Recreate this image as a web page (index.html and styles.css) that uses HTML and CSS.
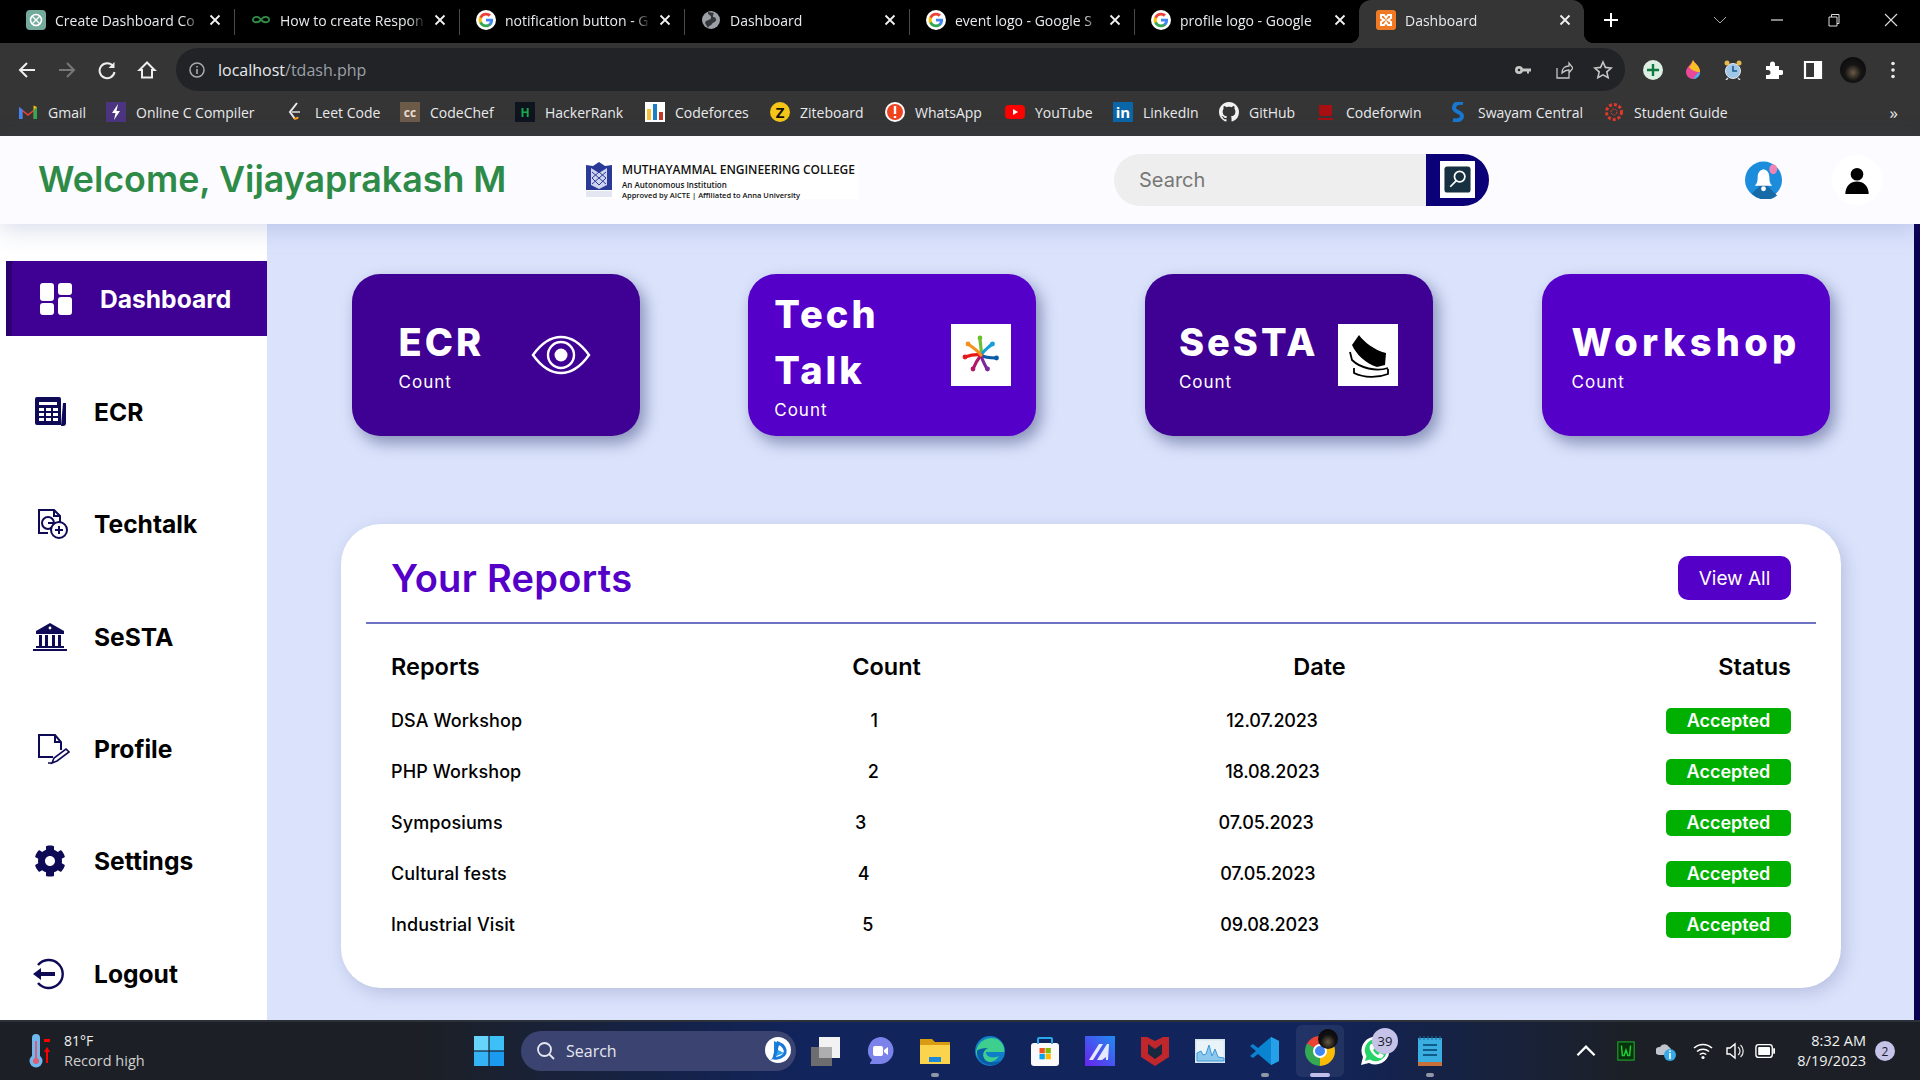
FILE: index.html
```html
<!DOCTYPE html>
<html>
<head>
  <title>Dashboard</title>
  <link rel="stylesheet" href="styles.css">
</head>
<body>

<svg class="defs">
  <symbol id="g-logo" viewBox="-3 -3 30 30">
    <circle cx="12" cy="12" r="15" fill="#fff"/>
    <path fill="#4285F4" d="M22.56 12.25c0-.78-.07-1.53-.2-2.25H12v4.26h5.92c-.26 1.37-1.04 2.53-2.21 3.31v2.77h3.57c2.08-1.92 3.28-4.74 3.28-8.09z"/>
    <path fill="#34A853" d="M12 23c2.97 0 5.46-.98 7.28-2.66l-3.57-2.77c-.98.66-2.23 1.06-3.71 1.06-2.86 0-5.29-1.93-6.16-4.53H2.18v2.84C3.99 20.53 7.7 23 12 23z"/>
    <path fill="#FBBC05" d="M5.84 14.09c-.22-.66-.35-1.36-.35-2.09s.13-1.43.35-2.09V7.07H2.18C1.43 8.55 1 10.22 1 12s.43 3.45 1.18 4.93l2.85-2.22.81-.62z"/>
    <path fill="#EA4335" d="M12 5.38c1.62 0 3.06.56 4.21 1.64l3.15-3.15C17.45 2.09 14.97 1 12 1 7.7 1 3.99 3.47 2.18 7.07l3.66 2.84c.87-2.6 3.3-4.53 6.16-4.53z"/>
  </symbol>
  <symbol id="close-x" viewBox="0 0 12 12">
    <path d="M1.5 1.5l9 9M10.5 1.5l-9 9" stroke="#f2f2f2" stroke-width="1.8" fill="none"/>
  </symbol>
</svg>

<div class="tabstrip">
  <div class="tab">
    <svg class="fav" viewBox="0 0 20 20"><rect width="20" height="20" rx="4" fill="#74aa9c"/><circle cx="10" cy="10" r="5.5" fill="none" stroke="#fff" stroke-width="1.6"/><path d="M6 6l8 8M14 6l-8 8" stroke="#fff" stroke-width="1.2"/></svg>
    <span class="tab-title">Create Dashboard Co</span>
    <svg class="tab-close"><use href="#close-x"/></svg>
  </div>
  <div class="tab">
    <svg class="fav" viewBox="0 0 20 20"><path d="M10 10C8 6 3 6 2 9c-1 3 4 5 8 1zM10 10c2-4 7-4 8-1 1 3-4 5-8 1z" fill="none" stroke="#2f8d46" stroke-width="1.8"/></svg>
    <span class="tab-title">How to create Respon</span>
    <svg class="tab-close"><use href="#close-x"/></svg>
  </div>
  <div class="tab">
    <svg class="fav"><use href="#g-logo"/></svg>
    <span class="tab-title">notification button - G</span>
    <svg class="tab-close"><use href="#close-x"/></svg>
  </div>
  <div class="tab">
    <svg class="fav" viewBox="0 0 20 20"><circle cx="10" cy="10" r="9" fill="#9aa0a6"/><path d="M7 2c-1 3 4 3 3 6S5 9 4 13l3 5c1-3 3-2 4-4s5-2 4-5-3-1-3-3 1-3 1-3z" fill="#35363a"/></svg>
    <span class="tab-title">Dashboard</span>
    <svg class="tab-close"><use href="#close-x"/></svg>
  </div>
  <div class="tab">
    <svg class="fav"><use href="#g-logo"/></svg>
    <span class="tab-title">event logo - Google S</span>
    <svg class="tab-close"><use href="#close-x"/></svg>
  </div>
  <div class="tab">
    <svg class="fav"><use href="#g-logo"/></svg>
    <span class="tab-title">profile logo - Google</span>
    <svg class="tab-close"><use href="#close-x"/></svg>
  </div>
  <div class="tab tab-active">
    <svg class="fav" viewBox="0 0 20 20"><rect width="20" height="20" rx="3" fill="#ef7a23"/><path d="M5 5h3l2 3 2-3h3v3l-3 2 3 2v3h-3l-2-3-2 3H5v-3l3-2-3-2z" fill="none" stroke="#fff" stroke-width="2"/></svg>
    <span class="tab-title">Dashboard</span>
    <svg class="tab-close"><use href="#close-x"/></svg>
  </div>
  <svg class="new-tab" viewBox="0 0 16 16"><path d="M8 1v14M1 8h14" stroke="#fff" stroke-width="2"/></svg>
  <div class="win-controls">
    <svg viewBox="0 0 14 14"><path d="M1 4l6 6 6-6" stroke="#aaa" fill="none"/></svg>
    <svg viewBox="0 0 14 14"><path d="M1 7h12" stroke="#ddd" stroke-width="1.2"/></svg>
    <svg viewBox="0 0 14 14"><path d="M2 4h8v9H2zM4.5 4V1.5h7.5v9H10" stroke="#ddd" fill="none"/></svg>
    <svg viewBox="0 0 14 14"><path d="M1 1l12 12M13 1L1 13" stroke="#ddd" stroke-width="1.1"/></svg>
  </div>
</div>

<div class="toolbar">
  <div class="nav-btns">
    <svg viewBox="0 0 20 20"><path d="M18 10H3M10 3l-7 7 7 7" fill="none" stroke="#eee" stroke-width="2"/></svg>
    <svg viewBox="0 0 20 20"><path d="M2 10h15M10 3l7 7-7 7" fill="none" stroke="#777" stroke-width="2"/></svg>
    <svg viewBox="0 0 20 20"><path d="M16 6a7.5 7.5 0 1 0 1.5 6" fill="none" stroke="#eee" stroke-width="2"/><path d="M17.5 2v6h-6z" fill="#eee"/></svg>
    <svg viewBox="0 0 20 20"><path d="M10 2.5L2.5 10H5v7.5h10V10h2.5z" fill="none" stroke="#eee" stroke-width="2"/></svg>
  </div>
  <div class="omnibox">
    <svg class="omni-info" viewBox="0 0 16 16"><circle cx="8" cy="8" r="7" fill="none" stroke="#aaa" stroke-width="1.5"/><path d="M8 7v5M8 4v1.6" stroke="#aaa" stroke-width="1.6"/></svg>
    <span class="url"><span class="url-host">localhost</span>/tdash.php</span>
    <div class="omni-icons">
      <svg viewBox="0 0 20 20"><circle cx="6" cy="10" r="4" fill="#c4c7c5"/><path d="M9 8.500h9v3h-2v2h-2v-2H9z" fill="#c4c7c5"/><circle cx="6" cy="10" r="1.300" fill="#222326"/></svg>
      <svg viewBox="0 0 20 20"><path d="M4 8v10h12v-5M9 13c0-5 3-7 7-7V3l4 5-4 5v-3c-3 0-5 1-7 3z" fill="none" stroke="#c4c7c5" stroke-width="1.3"/></svg>
      <svg viewBox="0 0 20 20"><path d="M10 2l2.400 5.400 5.800.6-4.400 3.900 1.300 5.800L10 14.800l-5.100 2.900 1.300-5.800L1.800 8l5.800-.6z" fill="none" stroke="#c4c7c5" stroke-width="1.6"/></svg>
    </div>
  </div>
  <div class="ext-icons">
    <svg viewBox="0 0 20 20"><circle cx="10" cy="10" r="10" fill="#dcefe2"/><path d="M10 4v12M4 10h12" stroke="#0c7a3e" stroke-width="2.4"/></svg>
    <svg viewBox="0 0 20 20"><path d="M10 0c2 4 7 6 7 12a7 7 0 0 1-14 0c0-5 5-7 7-12z" fill="#ec4899"/><path d="M10 0c2 4 7 6 7 12-4 0-9-2-11-5 2-2 3-4 4-7z" fill="#fbbf24"/><path d="M17 12a7 7 0 0 1-7 7c2-2 4-6 7-7z" fill="#38bdf8"/></svg>
    <svg viewBox="0 0 20 20"><circle cx="10" cy="11" r="7.5" fill="#9fc7e8" stroke="#e5e7eb"/><path d="M10 6v5h4" stroke="#1e5a8a" stroke-width="1.6" fill="none"/><circle cx="4" cy="3" r="2.5" fill="#e5b94f"/><circle cx="16" cy="3" r="2.5" fill="#e5b94f"/><path d="M5 18l-2 2M15 18l2 2" stroke="#ddd" stroke-width="1.5"/></svg>
    <svg viewBox="0 0 20 20"><path d="M3 6h4V4a2.500 2.500 0 0 1 5 0v2h4v4h2a2.500 2.500 0 0 1 0 5h-2v4H3v-4h2a2.500 2.500 0 0 0 0-5H3z" fill="#fff"/></svg>
    <svg viewBox="0 0 20 20"><path d="M2 2h16v16H2z" fill="none" stroke="#fff" stroke-width="2.2"/><rect x="11" y="2" width="7" height="16" fill="#fff"/></svg>
    <span class="ext-avatar"></span>
    <svg viewBox="0 0 20 20"><circle cx="10" cy="3.500" r="1.800" fill="#e8eaed"/><circle cx="10" cy="10" r="1.800" fill="#e8eaed"/><circle cx="10" cy="16.500" r="1.800" fill="#e8eaed"/></svg>
  </div>
</div>

<div class="bookmarks">
  <div class="bm"><svg class="bm-icon" viewBox="0 0 20 20"><path d="M1 5l9 7 9-7v12h-3.500V9.500L10 14 4.500 9.500V17H1z" fill="#ea4335"/><path d="M1 17V5l3.500 2.600V17z" fill="#4285f4"/><path d="M19 17V5l-3.500 2.600V17z" fill="#34a853"/><path d="M15.500 3.500L19 5l-3.500 3z" fill="#fbbc05"/></svg>Gmail</div>
  <div class="bm"><svg class="bm-icon" viewBox="0 0 20 20"><rect width="20" height="20" fill="#4b3480"/><path d="M12 2L6 11h3.500L8 18l6-9h-3.500z" fill="#fff"/></svg>Online C Compiler</div>
  <div class="bm"><svg class="bm-icon" viewBox="0 0 20 20"><path d="M12 1L5 10l5 7" fill="none" stroke="#e8eaed" stroke-width="2"/><path d="M7 10h8" stroke="#b3b3b3" stroke-width="2"/><path d="M13 15c-1 2-3 2-4 1" stroke="#ffa116" fill="none" stroke-width="2"/></svg>Leet Code</div>
  <div class="bm"><span class="bm-icon bm-cc">cc</span>CodeChef</div>
  <div class="bm"><span class="bm-icon bm-hr">H</span>HackerRank</div>
  <div class="bm"><svg class="bm-icon" viewBox="0 0 20 20"><rect width="20" height="20" fill="#fff"/><rect x="2" y="7" width="4" height="11" fill="#f5c33b"/><rect x="8" y="2" width="4" height="16" fill="#1b81c4"/><rect x="14" y="10" width="4" height="8" fill="#c0392b"/></svg>Codeforces</div>
  <div class="bm"><span class="bm-icon bm-zite">Z</span>Ziteboard</div>
  <div class="bm"><svg class="bm-icon" viewBox="0 0 20 20"><circle cx="10" cy="10" r="10" fill="#fff"/><circle cx="10" cy="10" r="8" fill="#f0441f"/><path d="M10 4v8M10 14v2" stroke="#fff" stroke-width="2.4"/></svg>WhatsApp</div>
  <div class="bm"><svg class="bm-icon" viewBox="0 0 20 20"><rect y="3" width="20" height="14" rx="4" fill="#f00"/><path d="M8 7l5 3-5 3z" fill="#fff"/></svg>YouTube</div>
  <div class="bm"><span class="bm-icon bm-in">in</span>LinkedIn</div>
  <div class="bm"><svg class="bm-icon" viewBox="0 0 16 16"><path fill="#f2f2f2" d="M8 0C3.58 0 0 3.58 0 8c0 3.54 2.29 6.53 5.47 7.59.4.07.55-.17.55-.38 0-.19-.01-.82-.01-1.49-2.01.37-2.53-.49-2.69-.94-.09-.23-.48-.94-.82-1.13-.28-.15-.68-.52-.01-.53.63-.01 1.08.58 1.23.82.72 1.21 1.87.87 2.33.66.07-.52.28-.87.51-1.07-1.78-.2-3.64-.89-3.64-3.95 0-.87.31-1.59.82-2.15-.08-.2-.36-1.02.08-2.12 0 0 .67-.21 2.2.82.64-.18 1.32-.27 2-.27s1.36.09 2 .27c1.53-1.04 2.2-.82 2.2-.82.44 1.1.16 1.92.08 2.12.51.56.82 1.27.82 2.15 0 3.07-1.87 3.75-3.65 3.95.29.25.54.73.54 1.48 0 1.07-.01 1.93-.01 2.2 0 .21.15.46.55.38A8.01 8.01 0 0016 8c0-4.42-3.58-8-8-8z"/></svg>GitHub</div>
  <div class="bm"><svg class="bm-icon" viewBox="0 0 20 20"><path d="M3 3h13v9a2 2 0 0 1-2 2H5a2 2 0 0 1-2-2zM2 16h15v2H2z" fill="#a80f12"/></svg>Codeforwin</div>
  <div class="bm"><svg class="bm-icon" viewBox="0 0 20 20"><path d="M15 1c-5-1-9 1-9 5s8 4 8 8-5 5-9 4" fill="none" stroke="#1877cf" stroke-width="4"/></svg>Swayam Central</div>
  <div class="bm"><svg class="bm-icon" viewBox="0 0 20 20"><circle cx="10" cy="10" r="7.500" fill="none" stroke="#e0392b" stroke-width="3" stroke-dasharray="3 2"/><circle cx="10" cy="10" r="3" fill="none" stroke="#e0392b" stroke-dasharray="2 1"/></svg>Student Guide</div>
  <div class="bm-more">&raquo;</div>
</div>

<header class="app-header">
  <h1 class="welcome">Welcome, Vijayaprakash M</h1>
  <div class="college">
    <svg class="crest" viewBox="0 0 28 36"><path d="M1 3l7 1 6-4 6 4 7-1v25H1z" fill="#2a3a96"/><path d="M6 6l8 5 8-5v17l-8 4-8-4z" fill="#cfd4ee"/><path d="M7 10l14 12M21 10L7 22M7 16l7 7 7-7M7 16l7-6 7 6" stroke="#2a3a96" fill="none"/><rect x="1" y="29" width="26" height="6" fill="#e4e6f2"/></svg>
    <div class="college-text">
      <div class="college-name">MUTHAYAMMAL ENGINEERING COLLEGE</div>
      <div class="college-sub">An Autonomous Institution</div>
      <div class="college-sub college-sub-small">Approved by AICTE | Affiliated to Anna University</div>
    </div>
  </div>
  <div class="search">
    <span class="search-text">Search</span>
    <div class="search-btn">
      <span class="search-tile">
        <svg viewBox="0 0 20 20"><rect x="1" y="1" width="18" height="18" rx="2" fill="#173140"/><circle cx="11.500" cy="8" r="3.600" fill="none" stroke="#fff" stroke-width="1.2"/><path d="M9 11l-4 4" stroke="#fff" stroke-width="1.2"/></svg>
      </span>
    </div>
  </div>
  <svg class="bell" viewBox="0 0 38 38">
    <circle cx="19" cy="19" r="19" fill="#1c8cdc"/>
    <path d="M19 21l14 14a19 19 0 0 1-26-2z" fill="#166aa8"/>
    <path d="M19 8c-4 1-6 4-6 8 0 5-1 7-3 9h18c-2-2-3-4-3-9 0-4-2-7-6-8z" fill="#fff"/>
    <circle cx="19" cy="28" r="2.500" fill="#fff"/>
    <ellipse cx="29" cy="8" rx="4" ry="5" fill="#f083b4"/>
  </svg>
  <div class="user-btn">
    <svg viewBox="0 0 26 30"><circle cx="13" cy="8" r="7" fill="#000"/><path d="M0 30c0-9 6-14 13-14s13 5 13 14z" fill="#000"/></svg>
  </div>
</header>

<div class="app-body">
  <nav class="sidebar">
    <a class="nav-item nav-active">
      <svg class="nav-icon" viewBox="0 0 40 32"><rect x="6" width="14" height="18" rx="3" fill="#fff"/><rect x="6" y="20" width="14" height="12" rx="3" fill="#fff"/><rect x="24" width="14" height="12" rx="3" fill="#fff"/><rect x="24" y="14" width="14" height="18" rx="3" fill="#fff"/></svg>
      <span>Dashboard</span>
    </a>
    <a class="nav-item">
      <svg class="nav-icon" viewBox="0 0 40 32"><path d="M5 3a2 2 0 0 1 2-2h22a2 2 0 0 1 2 2v26H7a2 2 0 0 1-2-2z" fill="#0e0a56"/><path d="M33 7h3v20a3 3 0 0 1-3 3h-2z" fill="#0e0a56"/><g fill="#fff"><rect x="9" y="6" width="18" height="3"/><rect x="9" y="12" width="5" height="3"/><rect x="16" y="12" width="5" height="3"/><rect x="23" y="12" width="5" height="3"/><rect x="9" y="17" width="5" height="3"/><rect x="16" y="17" width="5" height="3"/><rect x="23" y="17" width="5" height="3"/><rect x="9" y="22" width="5" height="3"/><rect x="16" y="22" width="5" height="3"/><rect x="23" y="22" width="5" height="3"/></g></svg>
      <span>ECR</span>
    </a>
    <a class="nav-item">
      <svg class="nav-icon" viewBox="0 0 40 32"><g fill="none" stroke="#0e0a56" stroke-width="2"><path d="M18 25H9V2h15l6 6v7"/><path d="M24 2v6h6"/><circle cx="18" cy="15" r="6"/><path d="M18 15h6"/><circle cx="29" cy="22" r="8" fill="#fff"/><path d="M29 18v8M25 22h8"/></g></svg>
      <span>Techtalk</span>
    </a>
    <a class="nav-item">
      <svg class="nav-icon" viewBox="0 0 40 32"><path d="M20 2L6 10v3h28v-3z" fill="#0e0a56"/><g fill="#0e0a56"><rect x="9" y="14" width="3" height="11"/><rect x="15" y="14" width="3" height="11"/><rect x="22" y="14" width="3" height="11"/><rect x="28" y="14" width="3" height="11"/><rect x="6" y="25" width="28" height="2"/><rect x="3" y="28" width="34" height="2"/></g><circle cx="20" cy="7" r="1.400" fill="#fff"/></svg>
      <span>SeSTA</span>
    </a>
    <a class="nav-item">
      <svg class="nav-icon" viewBox="0 0 40 32"><g fill="none" stroke="#0e0a56" stroke-width="2"><path d="M23 24H9V2h16l6 7v8"/><path d="M25 2v7h6"/></g><path d="M22 30l2-5 12-9 3 3-12 9zM22 30h-4" fill="#fff" stroke="#0e0a56" stroke-width="1.6"/></svg>
      <span>Profile</span>
    </a>
    <a class="nav-item">
      <svg class="nav-icon" viewBox="-34 0 580 512"><path fill="#0e0a56" d="M487.4 315.7l-42.6-24.6c4.3-23.2 4.3-47 0-70.2l42.6-24.6c4.9-2.8 7.1-8.6 5.5-14-11.1-35.6-30-67.8-54.7-94.6-3.8-4.1-10-5.1-14.8-2.3L380.8 110c-17.9-15.4-38.5-27.3-60.8-35.1V25.8c0-5.6-3.9-10.5-9.4-11.7-36.7-8.2-74.3-7.8-109.2 0-5.5 1.2-9.4 6.1-9.4 11.7V75c-22.2 7.9-42.8 19.8-60.8 35.1L88.7 85.5c-4.9-2.8-11-1.9-14.8 2.3-24.7 26.7-43.6 58.9-54.7 94.6-1.7 5.4.6 11.2 5.5 14L67.3 221c-4.3 23.2-4.3 47 0 70.2l-42.6 24.6c-4.9 2.8-7.1 8.6-5.5 14 11.1 35.6 30 67.8 54.7 94.6 3.8 4.1 10 5.1 14.8 2.3l42.6-24.6c17.9 15.4 38.5 27.3 60.8 35.1v49.2c0 5.6 3.9 10.5 9.4 11.7 36.7 8.2 74.3 7.8 109.2 0 5.5-1.2 9.4-6.1 9.4-11.7v-49.2c22.2-7.9 42.8-19.8 60.8-35.1l42.6 24.6c4.9 2.8 11 1.9 14.8-2.3 24.7-26.7 43.6-58.9 54.7-94.6 1.5-5.5-.7-11.3-5.6-14.1zM256 336c-44.1 0-80-35.9-80-80s35.9-80 80-80 80 35.9 80 80-35.9 80-80 80z"/></svg>
      <span>Settings</span>
    </a>
    <a class="nav-item">
      <svg class="nav-icon" viewBox="0 0 40 32"><path d="M8 7a14 14 0 1 1 0 18" fill="none" stroke="#0e0a56" stroke-width="2.4"/><path d="M3 16l8-6v4h14v4H11v4z" fill="#0e0a56"/></svg>
      <span>Logout</span>
    </a>
  </nav>

  <main class="content">
    <section class="cards">
      <div class="card card-dark card-ecr">
        <div>
          <div class="card-title">ECR</div>
          <div class="card-count">Count</div>
        </div>
        <svg class="card-eye" viewBox="1 0 58 40"><path d="M2 20C12 6 22 2 30 2s18 4 28 18C48 34 38 38 30 38S12 34 2 20z" fill="none" stroke="#fff" stroke-width="2.4"/><circle cx="30" cy="20" r="13" fill="none" stroke="#fff" stroke-width="2.4"/><circle cx="30" cy="20" r="6.500" fill="#fff"/></svg>
      </div>
      <div class="card card-tech">
        <div>
          <div class="card-title">Tech<br>Talk</div>
          <div class="card-count">Count</div>
        </div>
        <svg class="card-pic" viewBox="0 0 60 62">
          <rect width="60" height="62" fill="#fff"/>
          <g fill="none" stroke-width="3.200" stroke-linecap="round">
            <path d="M30 31C31 25 29 20 29 15" stroke="#6cc02e"/>
            <path d="M30 31C33 26 37 24 41 20" stroke="#15a0d8"/>
            <path d="M30 31C34 34 39 34 45 34" stroke="#0a5aa8"/>
            <path d="M30 31C31 36 34 41 36 45" stroke="#7b2a9c"/>
            <path d="M30 31C27 35 24 40 22 45" stroke="#b01868"/>
            <path d="M30 31C25 30 20 31 14 33" stroke="#e81818"/>
            <path d="M30 31C27 27 23 24 17 20" stroke="#f59020"/>
          </g>
          <circle cx="29" cy="14" r="2.400" fill="#6cc02e"/>
          <circle cx="41.500" cy="20" r="2.400" fill="#15a0d8"/>
          <circle cx="45.500" cy="34" r="2.400" fill="#0a5aa8"/>
          <circle cx="36.500" cy="45" r="2.400" fill="#7b2a9c"/>
          <circle cx="22" cy="45" r="2.400" fill="#b01868"/>
          <circle cx="14" cy="33" r="2.400" fill="#e81818"/>
          <circle cx="17" cy="20" r="2.400" fill="#f59020"/>
        </svg>
      </div>
      <div class="card card-dark card-sesta">
        <div>
          <div class="card-title">SeSTA</div>
          <div class="card-count">Count</div>
        </div>
        <svg class="card-pic" viewBox="0 0 60 62">
          <rect width="60" height="62" fill="#fff"/>
          <path d="M21 11L14 21C18 30 28 40 39 43L47 41L48 29C36 26 26 18 21 11z" fill="#000"/>
          <path d="M12 28L14 36C22 44 38 48 50 44M16 44v5c10 5 24 5 34 1v-5" fill="none" stroke="#000" stroke-width="1.800"/>
        </svg>
      </div>
      <div class="card card-work">
        <div>
          <div class="card-title">Workshop</div>
          <div class="card-count">Count</div>
        </div>
      </div>
    </section>

    <section class="panel">
      <div class="panel-head">
        <h2>Your Reports</h2>
        <a class="view-all">View All</a>
      </div>
      <div class="report-table">
        <div class="report-row report-head">
          <span>Reports</span><span>Count</span><span>Date</span><span>Status</span>
        </div>
        <div class="report-row">
          <span class="report-name">DSA Workshop</span><span>1</span><span class="report-date">12.07.2023</span><span class="status">Accepted</span>
        </div>
        <div class="report-row">
          <span class="report-name">PHP Workshop</span><span>2</span><span class="report-date">18.08.2023</span><span class="status">Accepted</span>
        </div>
        <div class="report-row">
          <span class="report-name">Symposiums</span><span>3</span><span class="report-date">07.05.2023</span><span class="status">Accepted</span>
        </div>
        <div class="report-row">
          <span class="report-name">Cultural fests</span><span>4</span><span class="report-date">07.05.2023</span><span class="status">Accepted</span>
        </div>
        <div class="report-row">
          <span class="report-name">Industrial Visit</span><span>5</span><span class="report-date">09.08.2023</span><span class="status">Accepted</span>
        </div>
      </div>
    </section>
  </main>
  <div class="scroll-edge"></div>
</div>

<footer class="taskbar">
  <div class="weather">
    <svg class="weather-icon" viewBox="0 0 24 36"><rect x="4" y="1" width="8" height="26" rx="4" fill="#6fb8ef"/><circle cx="8" cy="28" r="6.500" fill="#6fb8ef"/><rect x="7" y="8" width="2" height="18" fill="#e05d6f"/><circle cx="8" cy="28" r="3" fill="#e05d6f"/><path d="M19 14l-3 5h2v11h2V19h2z" fill="#f00"/><rect x="16" y="6" width="6" height="3" fill="#f00"/></svg>
    <div class="weather-text">
      <div>81°F</div>
      <div class="weather-note">Record high</div>
    </div>
  </div>
  <div class="tb-item">
    <svg viewBox="0 0 30 30"><rect width="14.400" height="14.400" fill="#67d5fb"/><rect x="15.600" width="14.400" height="14.400" fill="#3cc0f7"/><rect y="15.600" width="14.400" height="14.400" fill="#35b4f5"/><rect x="15.600" y="15.600" width="14.400" height="14.400" fill="#1a9bf0"/></svg>
  </div>
  <div class="tb-search">
    <svg viewBox="0 0 20 20"><circle cx="8.500" cy="8.500" r="6.500" fill="none" stroke="#e4e7ef" stroke-width="1.8"/><path d="M13 13l5 5" stroke="#e4e7ef" stroke-width="1.8"/></svg>
    <span>Search</span>
    <svg class="tb-bing" viewBox="0 0 26 28"><circle cx="13" cy="13" r="13" fill="#fff"/><path d="M4 24l5-3V4l4 2v11l-4 3" fill="#1684e0"/><path d="M9 20l10-4-6-3" fill="#2aa5f0"/><path d="M13 6c6 2 8 7 7 10s-6 6-11 5z" fill="none" stroke="#1a78d6" stroke-width="3"/></svg>
  </div>
  <div class="tb-item">
    <svg viewBox="0 0 30 30"><rect x="1" y="11" width="21" height="19" fill="#6d6d70"/><rect x="9" y="1" width="21" height="21" fill="#f2f2f2"/><rect x="9" y="11" width="13" height="11" fill="#aeaeb0"/></svg>
  </div>
  <div class="tb-item">
    <svg viewBox="0 0 30 30"><path d="M15 1a13.500 13.500 0 0 1 0 27H5v-1l2-3A13.500 13.500 0 0 1 15 1z" fill="#7b83eb"/><rect x="8" y="10" width="10" height="10" rx="2" fill="#fff"/><path d="M19 14l4-3v8l-4-3z" fill="#fff"/></svg>
  </div>
  <div class="tb-item">
    <svg viewBox="0 0 30 30"><path d="M0 3h12l3 3h15v5H0z" fill="#d99b12"/><rect y="9" width="30" height="19" fill="#fcd34d"/><rect x="9" y="21" width="12" height="5" fill="#1e88d9"/></svg>
    <i class="tb-dot"></i>
  </div>
  <div class="tb-item">
    <svg viewBox="0 0 30 30"><circle cx="15" cy="15" r="15" fill="#0f7fc9"/><path d="M2 12C5 4 14 0 22 3c6 3 8 9 7 13H11c0 5 6 7 13 4-4 7-14 8-18 4C1 20 0 17 2 12z" fill="#3ecf8e"/><path d="M2 15c-1 7 6 14 14 14 4 0 7-1 9-4-6 2-14 2-16-3-2-4 0-8 4-10-5 0-10 1-11 3z" fill="#0a5ca8"/></svg>
  </div>
  <div class="tb-item">
    <svg viewBox="0 0 30 30"><rect x="1" y="7" width="28" height="23" rx="3" fill="#fafafa"/><path d="M8 8V3a1 1 0 0 1 1-1h12a1 1 0 0 1 1 1v5" fill="none" stroke="#28a8ea" stroke-width="2"/><rect x="9.500" y="12" width="5.300" height="5.300" fill="#f25022"/><rect x="15.500" y="12" width="5.300" height="5.300" fill="#7fba00"/><rect x="9.500" y="18" width="5.300" height="5.300" fill="#00a4ef"/><rect x="15.500" y="18" width="5.300" height="5.300" fill="#ffb900"/></svg>
  </div>
  <div class="tb-item">
    <svg viewBox="0 0 30 30"><defs><linearGradient id="tb-mail" x1="0" y1="1" x2="1" y2="0"><stop offset="0" stop-color="#6a22f0"/><stop offset="1" stop-color="#1f8cf0"/></linearGradient></defs><rect width="30" height="30" fill="url(#tb-mail)"/><path d="M4 24L14 8h4L8 24zM12 24L22 8h2l-1 16h-2v-3l-4 3z" fill="#e6eaff"/></svg>
  </div>
  <div class="tb-item">
    <svg viewBox="0 0 30 30"><path d="M1 1h6l8 4 8-4h6v20l-14 9L1 21z" fill="#c0272d"/><path d="M8 8l7 5 7-5v10l-7 5-7-5z" fill="#1a2740"/></svg>
  </div>
  <div class="tb-item">
    <svg viewBox="0 0 30 24"><rect width="30" height="24" fill="#d4e4ec"/><rect x="1.500" y="1.500" width="27" height="21" fill="#eaf3f8"/><path d="M2 22v-8l4-2 2 4 3-1 3-9 3 11 3-7 3 8 6 1v3z" fill="#8cc8ee" stroke="#3c98d8"/></svg>
  </div>
  <div class="tb-item">
    <svg viewBox="0 0 30 30"><path d="M21 1l8 4v20l-8 4L8 18l-5 4-3-2 6-5-6-5 3-2 5 4z" fill="#0a84d0"/><path d="M21 1l8 4v20l-8 4z" fill="#27a0ea"/></svg>
    <i class="tb-dot"></i>
  </div>
  <div class="tb-item tb-item-active">
    <span class="chrome-icon"><i></i></span>
    <span class="chrome-avatar"></span>
    <i class="tb-bar"></i>
  </div>
  <div class="tb-item">
    <svg viewBox="0 0 30 30"><path d="M1 29l2-8a14 14 0 1 1 6 6z" fill="#fff"/><path d="M5 25l1.500-5a11 11 0 1 1 3.500 3.500z" fill="#25d366"/><path d="M11 8c-2 2-2 5 1 9s7 6 10 5l2-3-4-2-2 2c-2-1-4-3-5-5l2-2-2-4z" fill="#fff"/></svg>
    <span class="tb-count">39</span>
  </div>
  <div class="tb-item">
    <svg viewBox="0 0 24 30"><rect y="2" width="24" height="24" fill="#3aaee0"/><rect y="26" width="24" height="4" fill="#c8703a"/><path d="M5 9h14M5 14h14M5 19h14" stroke="#0d5c8a" stroke-width="2"/><path d="M2 0v4M6 0v4M10 0v4M14 0v4M18 0v4M22 0v4" stroke="#1c6f9c"/></svg>
    <i class="tb-dot"></i>
  </div>
  <div class="tray">
    <div class="tray-item"><svg viewBox="0 0 14 10"><path d="M1 8l6-6 6 6" fill="none" stroke="#fff" stroke-width="1.6"/></svg></div>
    <div class="tray-item"><svg viewBox="0 0 20 22"><rect x="1" y="1" width="18" height="20" fill="#07320d" stroke="#1fa82b" stroke-width="1.2"/><path d="M5 5l1 11h2l2-6 2 6h2l1-11" fill="none" stroke="#1fd030" stroke-width="1.6"/></svg></div>
    <div class="tray-item"><svg viewBox="0 0 20 20"><path d="M3 14a4 4 0 0 1 1-8 5 5 0 0 1 9 0c3 1 3 8 0 8z" fill="#c0c4cc"/><circle cx="14" cy="14" r="6" fill="#38a8e8"/><path d="M14 12v6M14 9.500v1.500" stroke="#fff" stroke-width="1.6"/></svg></div>
    <div class="tray-item tray-wifi"><svg viewBox="0 0 20 18"><g fill="none" stroke="#fff" stroke-width="1.5"><path d="M1 6a13 13 0 0 1 18 0M4 9.500a9 9 0 0 1 12 0M6.800 12.500a5 5 0 0 1 6.400 0"/></g><circle cx="10" cy="15.500" r="1.600" fill="#fff"/></svg></div>
    <div class="tray-item tray-small"><svg viewBox="0 0 20 18"><path d="M2 6h3l5-4v14l-5-4H2z" fill="none" stroke="#fff" stroke-width="1.4"/><path d="M13 5a5 5 0 0 1 0 8M15.500 3a8 8 0 0 1 0 12" fill="none" stroke="#ddd" stroke-width="1.300"/></svg></div>
    <div class="tray-item tray-small"><svg viewBox="0 0 22 16"><rect x="1" y="1" width="18" height="14" rx="3" fill="none" stroke="#fff" stroke-width="1.500"/><rect x="3.500" y="3.500" width="13" height="9" rx="1" fill="#fff"/><rect x="20" y="5" width="2" height="6" fill="#fff"/></svg></div>
    <div class="clock">
      <div>8:32 AM</div>
      <div>8/19/2023</div>
    </div>
    <span class="notif-badge">2</span>
  </div>
</footer>

</body>
</html>
```

FILE: styles.css
```css
* {
  box-sizing: border-box;
}

html, body {
  margin: 0;
  height: 100%;
}

body {
  width: 1920px;
  height: 1080px;
  overflow: hidden;
  display: flex;
  flex-direction: column;
  font-family: "Inter", "Liberation Sans", sans-serif;
  background: #dbe3fc;
}

.defs { display: none; }

/* browser chrome */
.tabstrip {
  height: 43px;
  flex: none;
  background: #000;
  display: flex;
  padding-left: 9px;
  font-family: "Open Sans", "Liberation Sans", sans-serif;
  font-size: 14px;
  color: #e8eaed;
}

.tab {
  position: relative;
  width: 225px;
  display: flex;
  align-items: center;
  padding: 0 10px 3px 17px;
}

.tab::after {
  content: "";
  position: absolute;
  right: -1px;
  top: 9px;
  bottom: 8px;
  width: 1px;
  background: #4a4a4a;
}

.tab:nth-last-of-type(3)::after,
.tab-active::after { display: none; }

.tab-active {
  background: #353535;
  border-radius: 12px 12px 0 0;
}

.tab-active::before {
  content: "";
  position: absolute;
  left: -10px;
  right: -10px;
  bottom: 0;
  height: 10px;
  background:
    radial-gradient(circle at 0 0, #000 10px, #353535 10.5px) left / 10px 10px no-repeat,
    radial-gradient(circle at 100% 0, #000 10px, #353535 10.5px) right / 10px 10px no-repeat;
}

.fav {
  width: 20px;
  height: 20px;
  flex: none;
  position: relative;
}

.tab-title {
  margin-left: 9px;
  width: 146px;
  white-space: nowrap;
  overflow: hidden;
  position: relative;
  -webkit-mask-image: linear-gradient(to right, #000 88%, transparent);
  mask-image: linear-gradient(to right, #000 88%, transparent);
}

.tab-close {
  width: 12px;
  height: 12px;
  margin-left: 8px;
  flex: none;
  position: relative;
}

.new-tab {
  width: 16px;
  height: 16px;
  margin: 12px 0 0 19px;
}

.win-controls {
  margin-left: auto;
  display: flex;
  gap: 43px;
  padding: 13px 22px 0 0;
}

.win-controls svg {
  width: 14px;
  height: 14px;
}

.toolbar {
  height: 49px;
  flex: none;
  background: #353535;
  display: flex;
  align-items: flex-start;
  padding-top: 5px;
  font-family: "Open Sans", "Liberation Sans", sans-serif;
}

.nav-btns {
  width: 176px;
  height: 43px;
  flex: none;
  display: flex;
  align-items: center;
  gap: 20px;
  padding-left: 17px;
}

.nav-btns svg {
  width: 20px;
  height: 20px;
}

.omnibox {
  width: 1449px;
  height: 43px;
  flex: none;
  border-radius: 22px;
  background: #222326;
  display: flex;
  align-items: center;
  padding-left: 13px;
}

.omni-info {
  width: 16px;
  height: 16px;
}

.url {
  margin-left: 13px;
  font-size: 16px;
  color: #9aa0a6;
}

.url-host { color: #e8eaed; }

.omni-icons {
  margin-left: auto;
  display: flex;
  gap: 20px;
  padding-right: 12px;
}

.omni-icons svg {
  width: 20px;
  height: 20px;
}

.ext-icons {
  display: flex;
  align-items: center;
  height: 43px;
  margin-left: 18px;
  gap: 20px;
}

.ext-icons svg {
  width: 20px;
  height: 20px;
}

.ext-avatar {
  width: 26px;
  height: 26px;
  margin: 0 -3px;
  border-radius: 50%;
  background: radial-gradient(circle at 50% 60%, #6b5a45 0, #151515 40%, #060606 100%);
}

.bookmarks {
  height: 44px;
  flex: none;
  background: #353535;
  display: grid;
  grid-template-columns: 88px 179px 115px 115px 130px 125px 115px 120px 108px 106px 97px 132px 156px 180px 1fr;
  align-items: center;
  padding: 0 0 4px 18px;
  font-family: "Open Sans", "Liberation Sans", sans-serif;
  font-size: 14px;
  color: #e8eaed;
}

.bm {
  display: flex;
  align-items: center;
  gap: 10px;
  white-space: nowrap;
}

.bm-icon {
  width: 20px;
  height: 20px;
  flex: none;
  display: flex;
  align-items: center;
  justify-content: center;
  font-weight: 700;
}

.bm-cc {
  background: #6d5b4a;
  color: #e8ddd0;
  font-size: 12px;
}

.bm-hr {
  background: #0e141e;
  color: #1ba94c;
  font-size: 12px;
}

.bm-zite {
  background: #f5c518;
  color: #111;
  border-radius: 50%;
  font-size: 15px;
}

.bm-in {
  background: #0a66a8;
  color: #fff;
  font-size: 15px;
}

.bm-more {
  justify-self: end;
  padding-right: 22px;
  font-size: 17px;
}

/* app header */
.app-header {
  height: 88px;
  flex: none;
  position: relative;
  z-index: 2;
  background: #fcfbff;
  box-shadow: 0 4px 24px rgba(60, 80, 160, 0.22);
  display: flex;
  align-items: center;
}

.welcome {
  margin: 0 0 2px 38px;
  width: 547px;
  font-size: 35.8px;
  font-weight: 600;
  color: #2e8b47;
  white-space: nowrap;
}

.college {
  width: 273px;
  height: 38px;
  display: flex;
  align-items: center;
  gap: 9px;
  background: #fff;
  color: #111;
}

.crest {
  width: 28px;
  height: 36px;
  flex: none;
}

.college-name {
  font-size: 12px;
  font-weight: 600;
  font-family: "Open Sans", sans-serif;
  white-space: nowrap;
  letter-spacing: -0.05px;
}

.college-sub {
  margin-top: 2px;
  font-size: 8px;
  font-weight: 600;
  font-family: "Open Sans", sans-serif;
  white-space: nowrap;
  line-height: 9px;
}

.college-sub-small {
  font-size: 7.5px;
}

.search {
  margin-left: 256px;
  width: 375px;
  height: 52px;
  display: flex;
  align-items: center;
  background: #eee;
  border-radius: 26px;
  overflow: hidden;
}

.search-text {
  flex: 1;
  padding-left: 25px;
  font-size: 20px;
  color: #777;
}

.search-btn {
  width: 63px;
  height: 52px;
  background: #0c0078;
  padding: 7px 0 0 14px;
}

.search-tile {
  display: flex;
  align-items: center;
  justify-content: center;
  width: 35px;
  height: 37px;
  background: #fff;
}

.search-tile svg {
  width: 29px;
  height: 29px;
}

.bell {
  margin-left: 256px;
  width: 37px;
  height: 38px;
}

.user-btn {
  margin-left: 50px;
  width: 50px;
  height: 50px;
  border-radius: 50%;
  background: #fff;
  display: flex;
  align-items: center;
  justify-content: center;
}

.user-btn svg {
  width: 26px;
  height: 27px;
}

/* app body */
.app-body {
  flex: 1;
  min-height: 0;
  display: flex;
}

.sidebar {
  width: 267px;
  flex: none;
  background: #fff;
  padding-top: 37px;
  display: flex;
  flex-direction: column;
  gap: 37.4px;
}

.nav-item {
  height: 75px;
  flex: none;
  display: flex;
  align-items: center;
  gap: 24px;
  padding-left: 30px;
  font-size: 24.6px;
  font-weight: 700;
  color: #000;
}

.nav-icon {
  width: 40px;
  height: 32px;
  flex: none;
}

.nav-active {
  margin-left: 6px;
  margin-bottom: 1px;
  border-left: 6px solid #2c006e;
  background: #3f0094;
  color: #fff;
  padding-left: 22px;
  gap: 26px;
}

.content {
  width: 1647px;
  flex: none;
  background: #dbe3fc;
  padding: 50px 0 0 84.6px;
}

.scroll-edge {
  flex: 1;
  background: #0a0052;
}

.cards {
  display: grid;
  grid-template-columns: repeat(4, 288px);
  column-gap: 108.66px;
}

.card {
  height: 162px;
  display: flex;
  align-items: center;
  justify-content: space-between;
  border-radius: 28px;
  background: #5500c8;
  color: #fff;
  box-shadow: 5px 7px 16px rgba(30, 40, 100, 0.45);
}

.card > div {
  margin-top: -2px;
}

.card-dark { background: #3f0094; }

.card-ecr { padding: 0 49px 0 47px; }
.card-tech { padding: 0 25px 0 26px; }
.card-sesta { padding: 0 35px 0 34px; }
.card-work { padding: 0 30px; }

.card-title {
  font-size: 38px;
  line-height: 56px;
  font-weight: 800;
  letter-spacing: 3px;
  white-space: nowrap;
}

.card-work .card-title {
  letter-spacing: 4.3px;
}

.card-count {
  height: 25px;
  line-height: 25px;
  font-size: 17px;
  letter-spacing: 1px;
}

.card-eye {
  width: 60px;
  height: 40px;
}

.card-pic {
  width: 60px;
  height: 62px;
}

.panel {
  margin: 88px 0 0 -10.6px;
  width: 1500px;
  height: 464px;
  background: #fff;
  border-radius: 40px;
  box-shadow: 4px 5px 18px rgba(40, 50, 110, 0.2);
}

.panel-head {
  height: 100px;
  margin: 0 25px;
  padding: 10px 25px 0;
  border-bottom: 2px solid #6e74c4;
  display: flex;
  align-items: center;
  justify-content: space-between;
}

.panel-head h2 {
  margin: 0;
  font-size: 38px;
  font-weight: 600;
  letter-spacing: 0.3px;
  color: #5500c8;
}

.view-all {
  width: 113px;
  height: 44px;
  display: flex;
  align-items: center;
  justify-content: center;
  border-radius: 10px;
  background: #5500c8;
  color: #fff;
  font-size: 19px;
  font-weight: 400;
}

.report-table {
  padding: 19px 50px 0;
}

.report-row {
  height: 51px;
  display: flex;
  align-items: center;
  justify-content: space-between;
  font-size: 18px;
  font-weight: 500;
  color: #000;
}

.report-name {
  letter-spacing: 0.1px;
}

.report-date {
  letter-spacing: -0.2px;
}

.report-head {
  height: 46px;
  margin-bottom: 6px;
  font-size: 23.5px;
  font-weight: 600;
}

.status {
  width: 125px;
  height: 26px;
  display: flex;
  align-items: center;
  justify-content: center;
  border-radius: 5px;
  background: #00b000;
  color: #fff;
  font-size: 18px;
  font-weight: 600;
}

/* windows taskbar */
.taskbar {
  height: 60px;
  flex: none;
  position: relative;
  z-index: 3;
  border-top: 2px solid #2c3038;
  background: linear-gradient(to right, #1c2026 0, #1c2026 22%, #11245c 42%, #11245c 68%, #1c2026 85%);
  display: flex;
  align-items: center;
  font-family: "Open Sans", "Liberation Sans", sans-serif;
  color: #f0f0f0;
  font-size: 14px;
}

.weather {
  width: 461px;
  flex: none;
  display: flex;
  align-items: center;
  gap: 12px;
  padding-left: 28px;
}

.weather-icon {
  width: 24px;
  height: 36px;
}

.weather-text {
  line-height: 20px;
}

.weather-note {
  color: #d0d0d0;
  font-size: 14.5px;
}

.tb-item {
  position: relative;
  width: 55px;
  height: 58px;
  flex: none;
  display: flex;
  align-items: center;
  justify-content: center;
}

.tb-item > svg {
  width: 30px;
  height: 30px;
}

.tb-item-active::before {
  content: "";
  position: absolute;
  left: 4px;
  right: 3px;
  top: 3px;
  bottom: 3px;
  border-radius: 6px;
  background: rgba(255, 255, 255, 0.07);
}

.tb-dot,
.tb-bar {
  position: absolute;
  bottom: 3px;
  left: 50%;
  height: 4px;
  width: 8px;
  margin-left: -4px;
  border-radius: 2px;
  background: #8f97a8;
}

.tb-bar {
  width: 20px;
  margin-left: -10px;
  background: #c4c0ec;
}

.tb-search {
  width: 275px;
  height: 40px;
  flex: none;
  margin: 0 1px 0 5px;
  display: flex;
  align-items: center;
  padding: 0 5px 0 15px;
  gap: 10px;
  border-radius: 20px;
  background: #3b4371;
  color: #e4e7ef;
  font-size: 16px;
}

.tb-search svg {
  width: 20px;
  height: 20px;
}

.tb-search svg.tb-bing {
  width: 26px;
  height: 28px;
  margin-left: auto;
}

.chrome-icon {
  position: relative;
  width: 30px;
  height: 30px;
  border-radius: 50%;
  background: conic-gradient(from 300deg, #ea4335 0 120deg, #fbbc05 120deg 240deg, #34a853 240deg 360deg);
  display: flex;
  align-items: center;
  justify-content: center;
}

.chrome-icon i {
  width: 14px;
  height: 14px;
  border-radius: 50%;
  background: #4285f4;
  border: 2px solid #fff;
}

.chrome-avatar {
  position: absolute;
  top: 7px;
  right: 9px;
  width: 20px;
  height: 20px;
  border-radius: 50%;
  background: radial-gradient(circle at 50% 65%, #6b5a45 0, #111 45%, #050505 100%);
}

.tb-count {
  position: absolute;
  top: 6px;
  right: 4px;
  width: 26px;
  height: 26px;
  border-radius: 50%;
  background: #c5c3e8;
  color: #1a1a2a;
  font-size: 13px;
  display: flex;
  align-items: center;
  justify-content: center;
}

.tray {
  margin-left: auto;
  display: flex;
  align-items: center;
  padding-right: 25px;
}

.tray-item {
  width: 40px;
  height: 40px;
  display: flex;
  align-items: center;
  justify-content: center;
}

.tray-item svg {
  width: 20px;
  height: 20px;
}

.tray-wifi { width: 34px; }
.tray-small { width: 30px; }

.clock {
  width: 86px;
  text-align: right;
  line-height: 20px;
  font-size: 14.5px;
}

.notif-badge {
  width: 20px;
  height: 20px;
  margin-left: 9px;
  border-radius: 50%;
  background: #c5c3e8;
  color: #1a1a2a;
  font-size: 12px;
  display: flex;
  align-items: center;
  justify-content: center;
}
```
